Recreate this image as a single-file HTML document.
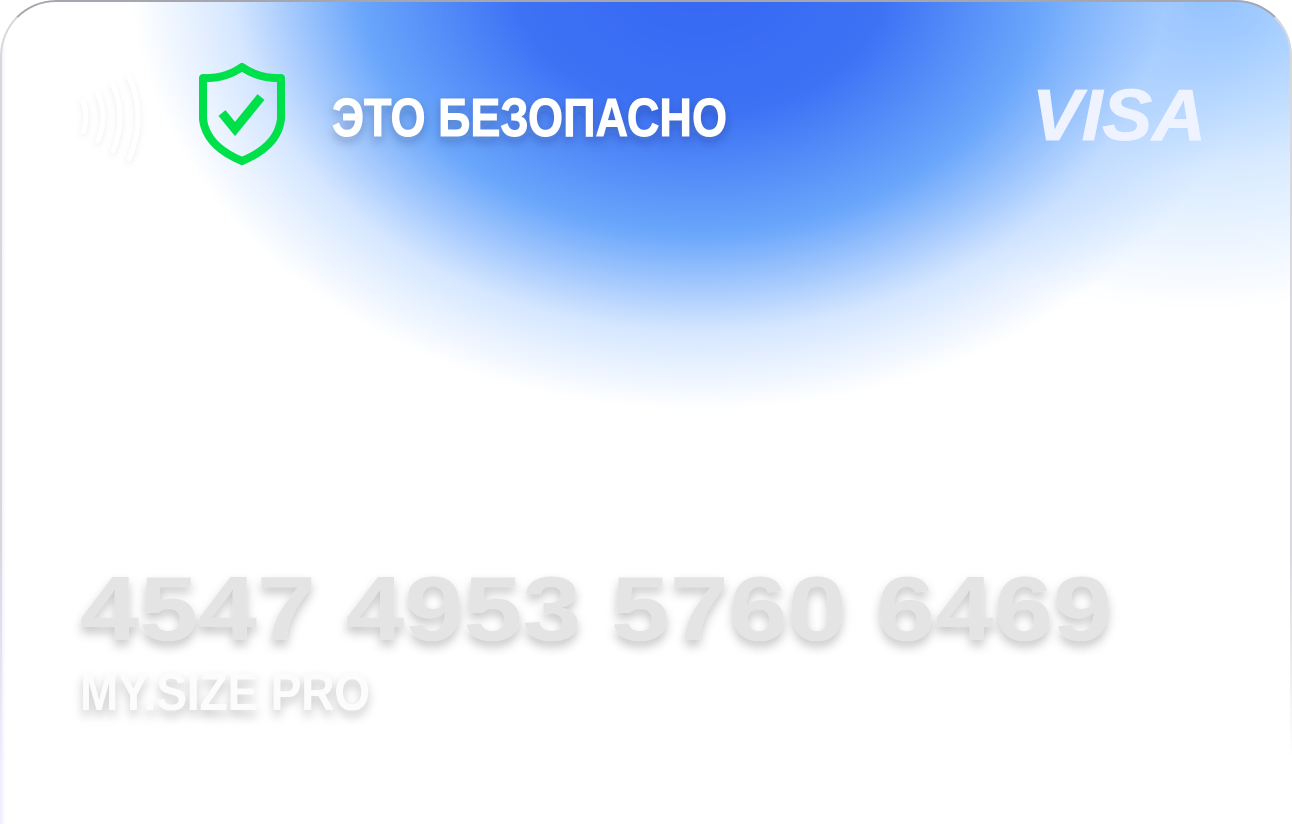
<!DOCTYPE html>
<html><head><meta charset="utf-8"><style>
html,body{margin:0;padding:0;background:#fff;width:1292px;height:824px;overflow:hidden}
.card{position:absolute;left:0;top:0;width:1292px;height:824px;overflow:hidden;border-radius:56px 56px 0 0;
background:
radial-gradient(ellipse 570px 440px at 700px -30px, #3566f2 0%, #3d72f5 33%, #6aa6fb 60%, rgba(170,205,255,.5) 82%, rgba(255,255,255,0) 100%),
radial-gradient(ellipse 420px 310px at 1200px 0px, rgba(110,175,255,.8) 0%, rgba(170,210,255,.45) 55%, rgba(255,255,255,0) 100%),
linear-gradient(90deg, rgba(225,220,255,.6) 0px, rgba(255,255,255,0) 6px),
#fff;}
.border{position:absolute;left:0;top:0;width:1288px;height:822px;border-radius:56px 56px 0 0;border:2px solid #d8d8dc;border-bottom:none;border-top-color:#a6a6ae;pointer-events:none;
-webkit-mask:linear-gradient(#000 0,#000 550px,transparent 760px);mask:linear-gradient(#000 0,#000 550px,transparent 760px)}
svg{position:absolute;left:0;top:0}
</style></head><body>
<div class="card"></div>
<div class="border"></div>
<svg width="1292" height="824" viewBox="0 0 1292 824">
<defs>
<filter id="sh" x="-10%" y="-30%" width="120%" height="170%"><feDropShadow dx="0" dy="6" stdDeviation="5" flood-color="#000" flood-opacity="0.22"/></filter>
<filter id="sh2" x="-10%" y="-30%" width="120%" height="170%"><feDropShadow dx="0" dy="5" stdDeviation="5" flood-color="#223" flood-opacity="0.25"/></filter>
<filter id="sh3" x="-50%" y="-30%" width="200%" height="170%"><feDropShadow dx="0" dy="2" stdDeviation="3" flood-color="#99a" flood-opacity="0.18"/></filter>
</defs>
<g fill="none" stroke="#fff" stroke-width="5" stroke-linecap="round" filter="url(#sh3)">
<path d="M83 102 Q89 117 83 132"/>
<path d="M98 94 Q108 117 98 141"/>
<path d="M113 85 Q127 117 113 151"/>
<path d="M129 77 Q147 117 129 159"/>
</g>
<path d="M242 67 Q225 79 203 78 L203 119 Q206 146 242 161 Q278 146 281 119 L281 78 Q259 79 242 67 Z" fill="none" stroke="#00e04a" stroke-width="8" stroke-linejoin="round"/>
<path d="M222 113 L235 129 L261 97" fill="none" stroke="#00e04a" stroke-width="9"/>
<text x="332" y="136" font-family="Liberation Sans, sans-serif" font-weight="bold" font-size="54" fill="#fff" stroke="#fff" stroke-width="1" textLength="395" lengthAdjust="spacingAndGlyphs" filter="url(#sh2)">ЭТО БЕЗОПАСНО</text>
<text x="1032" y="140" font-family="Liberation Sans, sans-serif" font-weight="bold" font-style="italic" font-size="72" fill="#eef3ff" stroke="#eef3ff" stroke-width="1" textLength="174" lengthAdjust="spacingAndGlyphs">VISA</text>
<text x="80" y="640" font-family="Liberation Sans, sans-serif" font-weight="bold" font-size="91" fill="#e4e4e4" textLength="1032" lengthAdjust="spacingAndGlyphs" filter="url(#sh)">4547 4953 5760 6469</text>
<text x="80" y="710" font-family="Liberation Sans, sans-serif" font-weight="bold" font-size="53" fill="#fcfcfc" textLength="290" lengthAdjust="spacingAndGlyphs" filter="url(#sh)">MY.SIZE PRO</text>
</svg>
</body></html>
